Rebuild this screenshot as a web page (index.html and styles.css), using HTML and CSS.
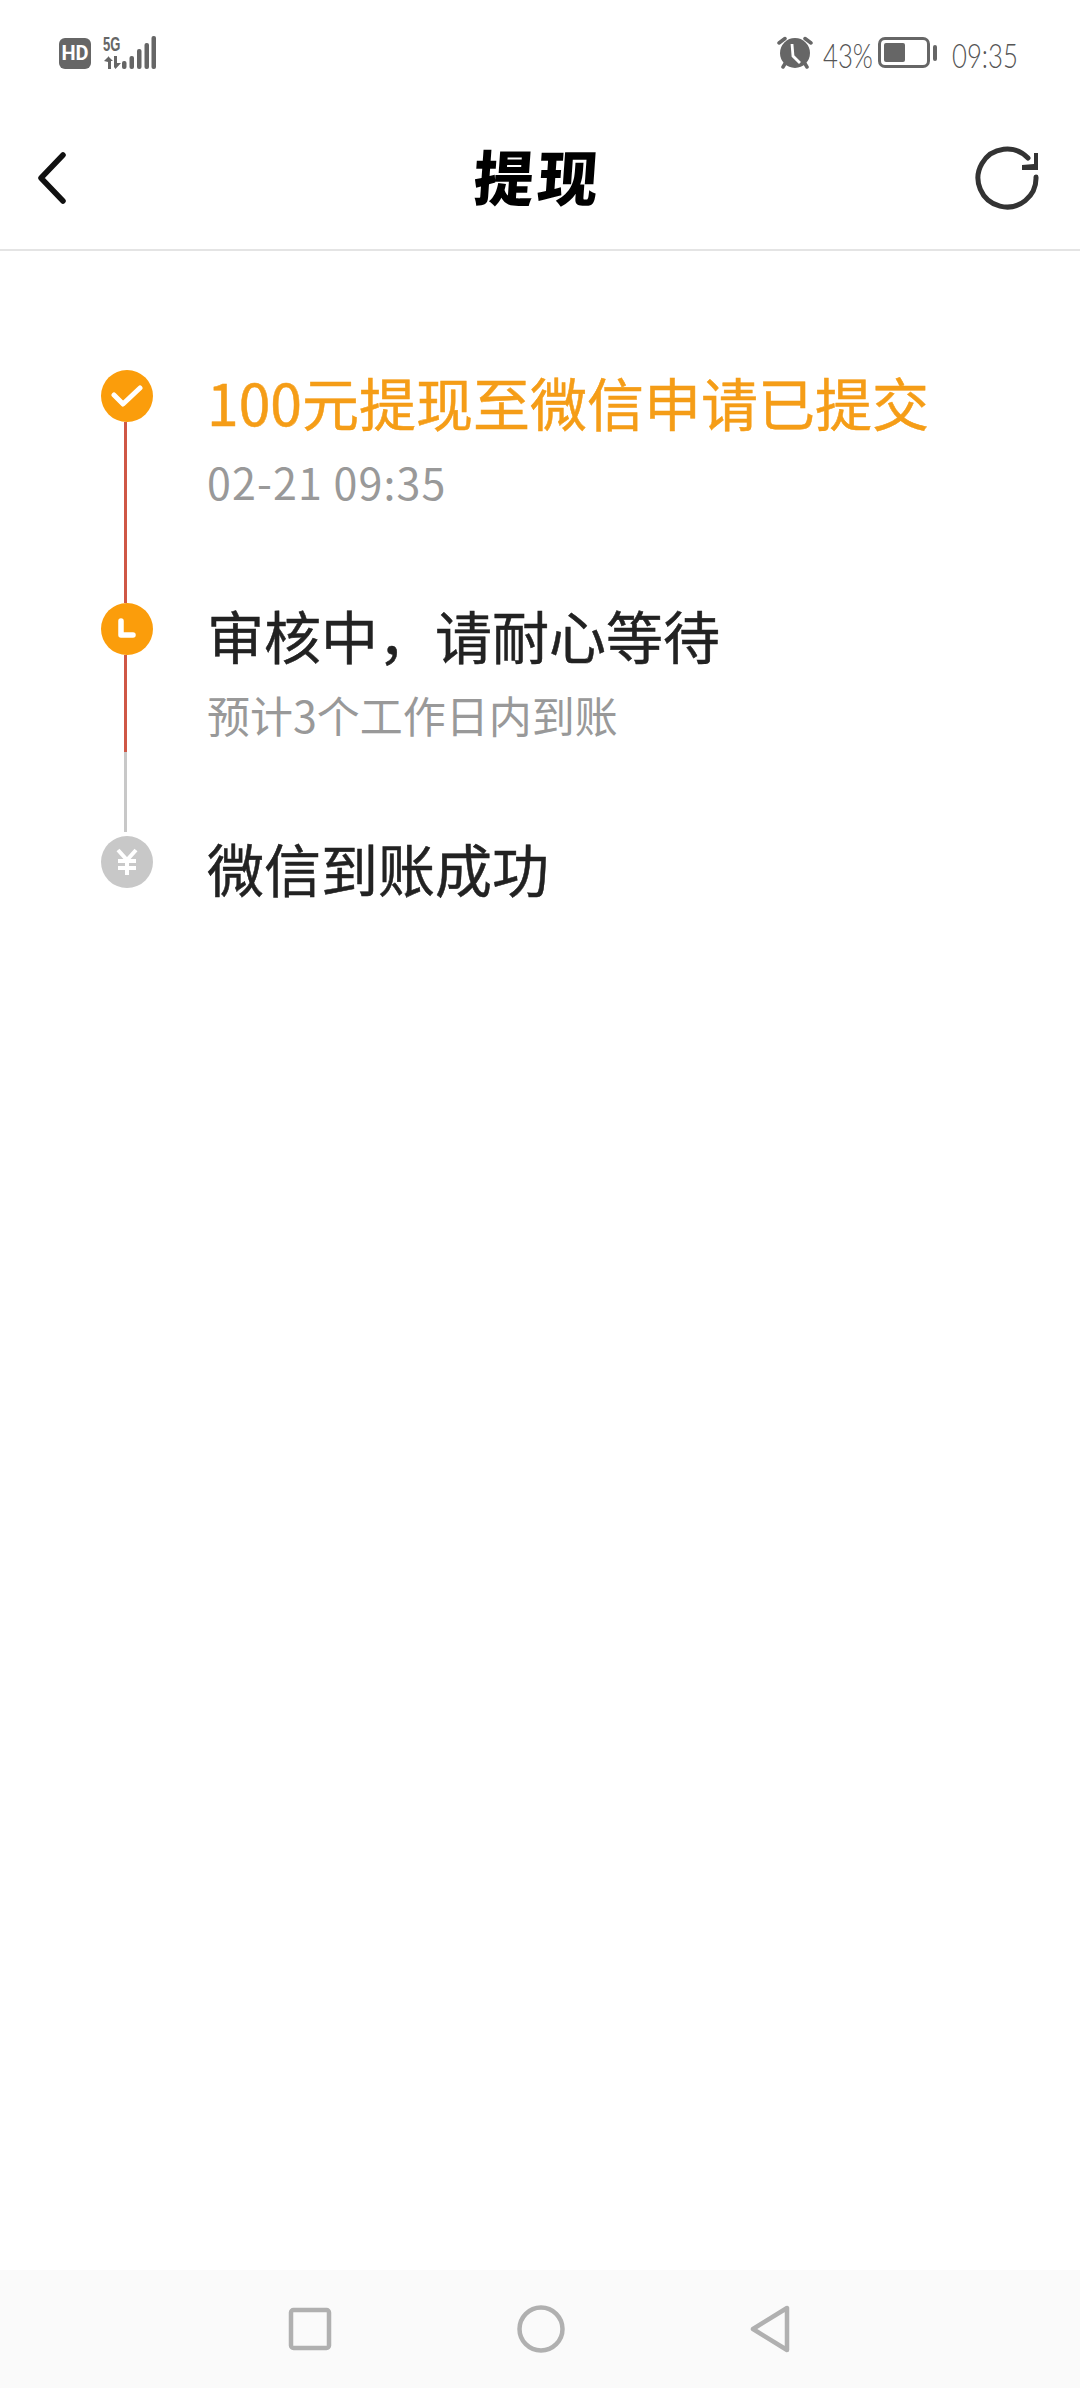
FILE: index.html
```html
<!DOCTYPE html>
<html lang="zh-CN">
<head>
    <meta charset="UTF-8">
    <meta name="viewport" content="width=device-width, initial-scale=1.0">
    <title>提现</title>
    <link rel="stylesheet" href="styles.css">
</head>
<body>
    <div id="screen">
        <div class="status-bar">
            <div class="status-left">
                <span class="hd-badge">HD</span>
                <div class="net-type">
                    <span class="net-label">5G</span>
                    <svg width="20" height="13" viewBox="0 0 20 13" fill="#666">
                        <path d="M5 0 L5 13 L8 13 L8 5 L10 5 Z M1 5 L5 1 L5 6 Z"/>
                        <path d="M11 0 L14 0 L14 7 L18 7 L12.5 13 L11 11 Z"/>
                    </svg>
                </div>
                <svg class="signal" width="34" height="34" viewBox="0 0 34 34" fill="#666">
                    <rect x="0" y="25" width="4.5" height="8" rx="2"/>
                    <rect x="7.5" y="20" width="4.5" height="13" rx="2"/>
                    <rect x="15" y="13" width="4.5" height="20" rx="2"/>
                    <rect x="22.5" y="7" width="4.5" height="26" rx="2"/>
                    <rect x="29.5" y="0" width="4.5" height="33" rx="2"/>
                </svg>
            </div>
            <div class="status-right">
                <svg width="36" height="33" viewBox="0 0 36 33">
                    <path d="M2 7 L8 2.5 M34 7 L28 2.5" stroke="#666" stroke-width="3.5" stroke-linecap="round"/>
                    <path d="M9 26 L6 31 M27 26 L30 31" stroke="#666" stroke-width="3.5" stroke-linecap="round"/>
                    <circle cx="18" cy="17" r="15" fill="#666"/>
                    <path d="M15 8 L16 20 L23 27" stroke="#fff" stroke-width="2.8" fill="none"/>
                </svg>
                <span class="hand-text percent">43%</span>
                <div class="battery">
                    <div class="battery-body"><div class="battery-level"></div></div>
                    <div class="battery-nub"></div>
                </div>
                <span class="hand-text clock">09:35</span>
            </div>
        </div>

        <header class="top-nav">
            <svg class="back-icon" width="32" height="52" viewBox="0 0 32 52">
                <path d="M27 3 L5 26 L27 49" fill="none" stroke="#111" stroke-width="5.5" stroke-linecap="round" stroke-linejoin="round"/>
            </svg>
            <h1 class="page-title">提现</h1>
            <svg class="refresh-icon" width="66" height="66" viewBox="0 0 66 66">
                <path d="M62 32 A29 29 0 1 1 54 13" fill="none" stroke="#333" stroke-width="5" stroke-linecap="round"/>
                <path d="M60 8 L64 8 L64 25 L48 25 L48 20 L60 19 Z" fill="#333"/>
            </svg>
        </header>

        <main class="timeline">
            <section class="step">
                <div class="rail">
                    <div class="dot dot-active">
                        <svg width="32" height="24" viewBox="0 0 32 24">
                            <path d="M3 11 L12 20 L29 4" fill="none" stroke="#fff" stroke-width="5" stroke-linecap="round" stroke-linejoin="round"/>
                        </svg>
                    </div>
                    <div class="line line-red line-full"></div>
                </div>
                <div class="step-text">
                    <h2 class="step-title step-title-active">100元提现至微信申请已提交</h2>
                    <p class="step-sub step-date">02-21 09:35</p>
                </div>
            </section>
            <section class="step">
                <div class="rail">
                    <div class="dot dot-active">
                        <svg width="20" height="22" viewBox="0 0 20 22">
                            <path d="M4 3 L4 17 L16 17" fill="none" stroke="#fff" stroke-width="5.5" stroke-linecap="round" stroke-linejoin="round"/>
                        </svg>
                    </div>
                    <div class="line line-red line-half"></div>
                    <div class="line line-gray"></div>
                </div>
                <div class="step-text">
                    <h2 class="step-title">审核中，请耐心等待</h2>
                    <p class="step-sub">预计3个工作日内到账</p>
                </div>
            </section>
            <section class="step">
                <div class="rail">
                    <div class="dot dot-idle">
                        <svg width="24" height="28" viewBox="0 0 24 28">
                            <path d="M3 2 L12 12 L21 2 M12 12 L12 27 M3 13 L21 13 M3 20 L21 20" fill="none" stroke="#fff" stroke-width="4"/>
                        </svg>
                    </div>
                </div>
                <div class="step-text">
                    <h2 class="step-title">微信到账成功</h2>
                </div>
            </section>
        </main>

        <nav class="bottom-nav">
            <svg width="44" height="44" viewBox="0 0 44 44">
                <rect x="3" y="3" width="38" height="38" rx="2.5" fill="none" stroke="#b0b0b0" stroke-width="4.5"/>
            </svg>
            <svg width="48" height="48" viewBox="0 0 48 48">
                <circle cx="24" cy="24" r="21.5" fill="none" stroke="#b0b0b0" stroke-width="4.5"/>
            </svg>
            <svg width="42" height="48" viewBox="0 0 42 48">
                <path d="M37 3 L37 45 L3 24 Z" fill="none" stroke="#b0b0b0" stroke-width="4.5" stroke-linejoin="round"/>
            </svg>
        </nav>
    </div>
</body>
</html>
```

FILE: styles.css
```css
* {
    box-sizing: border-box;
}

html, body {
    margin: 0;
    padding: 0;
    background-color: #fff;
}

#screen {
    width: 1080px;
    height: 2388px;
    display: flex;
    flex-direction: column;
    font-family: "Noto Sans CJK SC", "Roboto", sans-serif;
}

/* status bar */
.status-bar {
    height: 106px;
    padding: 36px 62px 0 59px;
    display: flex;
    justify-content: space-between;
    align-items: flex-start;
    color: #666;
}

.status-left {
    display: flex;
    align-items: flex-start;
}

.hd-badge {
    width: 32px;
    height: 31px;
    margin-top: 2px;
    margin-right: 12px;
    background-color: #666;
    border-radius: 6px;
    color: #fff;
    font-family: "Roboto", sans-serif;
    font-size: 20px;
    font-weight: 700;
    line-height: 31px;
    text-align: center;
}

.net-type {
    width: 20px;
    display: flex;
    flex-direction: column;
}

.net-label {
    height: 20px;
    font-family: "Liberation Sans", sans-serif;
    font-size: 21px;
    font-weight: 700;
    line-height: 16px;
    white-space: nowrap;
    transform: scaleX(0.62);
    transform-origin: left top;
}

.signal {
    margin-left: -1px;
}

.status-right {
    display: flex;
    align-items: flex-start;
}

/* the phone's handwriting font isn't available, a narrowed light face is closest */
.hand-text {
    font-family: "Lato", sans-serif;
    font-weight: 300;
    font-size: 33px;
    line-height: 33px;
    color: #555;
    white-space: nowrap;
    transform: scaleX(0.78);
    transform-origin: left center;
}

.percent {
    width: 45px;
    margin-top: 3px;
    margin-left: 10px;
}

.clock {
    width: 66px;
    margin-top: 3px;
    margin-left: 15px;
}

.battery {
    display: flex;
    align-items: center;
    margin-top: 1px;
    margin-left: 10px;
}

.battery-body {
    width: 52px;
    height: 31px;
    padding: 3px;
    border: 3px solid #666;
    border-radius: 7px;
}

.battery-level {
    width: 21px;
    height: 19px;
    background-color: #666;
    border-radius: 2px;
}

.battery-nub {
    width: 4px;
    height: 16px;
    margin-left: 3px;
    background-color: #666;
    border-radius: 2px;
}

/* top nav */
.top-nav {
    height: 145px;
    padding: 0 40px 0 36px;
    display: grid;
    grid-template-columns: 1fr auto 1fr;
    align-items: center;
    border-bottom: 2px solid #e4e4e4;
}

.refresh-icon {
    justify-self: end;
}

.page-title {
    margin: 0 0 5px;
    font-size: 60px;
    font-weight: 900;
    line-height: 60px;
    color: #000;
    letter-spacing: 4px;
    transform: skewX(-4deg);
}

/* timeline */
.timeline {
    flex: 1;
    padding: 119px 0 0 101px;
}

.step {
    display: flex;
    height: 233px;
}

.rail {
    width: 52px;
    margin-right: 54px;
    display: flex;
    flex-direction: column;
    align-items: center;
}

.dot {
    width: 52px;
    height: 52px;
    flex: none;
    border-radius: 50%;
    display: flex;
    justify-content: center;
    align-items: center;
}

.dot-active {
    background-color: #fb9d0b;
}

.dot-idle {
    background-color: #c8c8c8;
}

.line {
    width: 3px;
    margin-right: 3px;
}

.line-red {
    background-color: #cf5746;
}

.line-full {
    height: 181px;
}

.line-half {
    height: 97px;
}

.line-gray {
    height: 80px;
    background-color: #c8c8c8;
}

.step-text {
    margin-top: -3px;
}

.step-title {
    margin: 0;
    font-size: 57px;
    font-weight: 400;
    line-height: 68px;
    color: #222;
    -webkit-text-stroke: 0.5px;
}

.step-title-active {
    color: #f59d17;
}

.step-sub {
    margin: 21px 0 0;
    font-size: 43px;
    line-height: 50px;
    color: #999;
}

.step-date {
    letter-spacing: 1.1px;
}

/* bottom nav */
.bottom-nav {
    height: 118px;
    padding: 0 288px;
    display: flex;
    justify-content: space-between;
    align-items: center;
    background-color: #fafafa;
}
```
